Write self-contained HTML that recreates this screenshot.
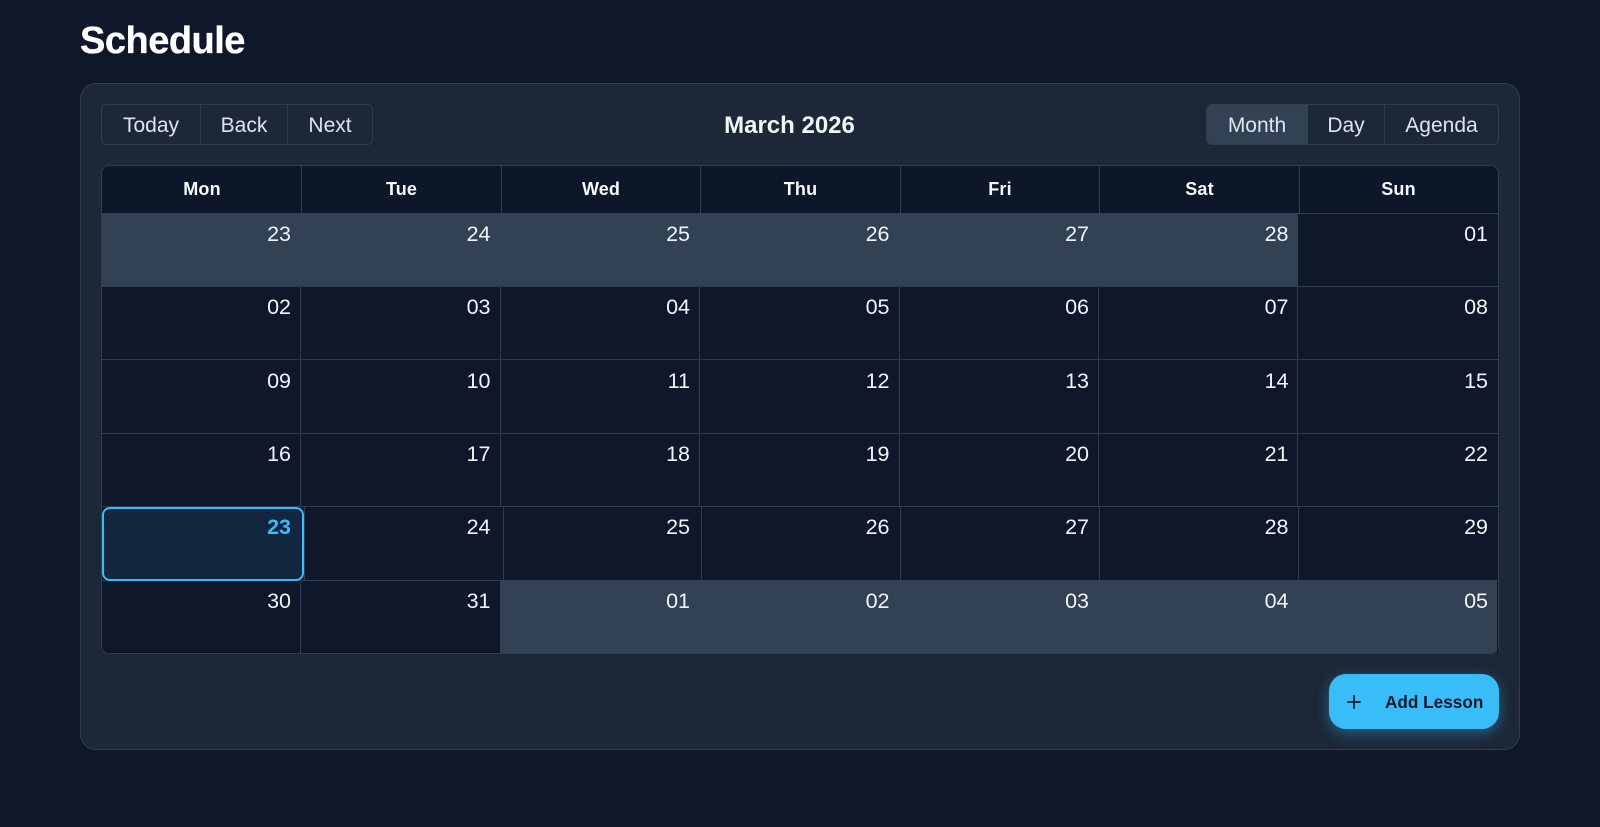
<!DOCTYPE html>
<html lang="en">
<head>
<meta charset="utf-8">
<title>Schedule</title>
<style>
html,body{margin:0;padding:0;width:1600px;height:827px;overflow:hidden;background:#0f172a;font-family:"Liberation Sans",sans-serif;}
.a,.l,.t,.n,.h{position:absolute}
.card{position:absolute;left:80px;top:83px;width:1438px;height:665px;background:#1c2737;border:1px solid #303c50;border-radius:16px}
.title{position:absolute;left:80px;top:19px;font-size:38px;line-height:44px;font-weight:700;color:#fff;letter-spacing:-.5px;white-space:nowrap;-webkit-text-stroke:.3px #fff}
.group{position:absolute;top:104px;height:39px;border:1px solid #303c50;border-radius:6px;overflow:hidden}
.t{top:114px;width:120px;text-align:center;font-size:21px;line-height:24px;color:#dfe5ee;white-space:nowrap}
.l{background:#303c50}
.month{position:absolute;left:724px;top:112px;width:131px;text-align:center;font-size:24px;line-height:28px;font-weight:700;color:#f1f5f9;white-space:nowrap}
.grid{position:absolute;left:101px;top:165px;width:1398px;height:489px;box-sizing:border-box;border:1px solid #303c50;border-radius:8px;overflow:hidden;background:#0f172a}
.h{top:178px;width:120px;text-align:center;font-size:18px;line-height:22px;font-weight:700;color:#f8fafc;letter-spacing:.15px}
.n{width:40px;text-align:right;font-size:21.5px;line-height:24px;color:#f1f5f9}
.c1{left:251px}.c2{left:450.5px}.c3{left:650px}.c4{left:849.5px}.c5{left:1049px}.c6{left:1248.5px}.c7{left:1448px}
.r1{top:222px}.r2{top:295px}.r3{top:369px}.r4{top:442px}.r5{top:515px}.r6{top:589px}
.today{position:absolute;left:102px;top:507px;width:202px;height:74px;box-sizing:border-box;border:2px solid #38bdf8;border-radius:8px;background:#13263f}
.btn{position:absolute;left:1329px;top:674px;width:170px;height:55px;background:#38bdf8;border-radius:17px;box-shadow:0 4px 14px rgba(56,189,248,.4)}
.btnt{position:absolute;left:1385px;top:692px;font-size:17.2px;line-height:20px;font-weight:700;color:#0f172a;white-space:nowrap}
</style>
</head>
<body>
<div class="title">Schedule</div>
<div class="card"></div>

<div class="group" style="left:101px;width:270px"></div>
<div class="l" style="left:200px;top:105px;width:1px;height:39px"></div>
<div class="l" style="left:287px;top:105px;width:1px;height:39px"></div>
<span class="t" style="left:91px">Today</span>
<span class="t" style="left:184px">Back</span>
<span class="t" style="left:270px">Next</span>

<div class="month">March 2026</div>

<div class="group" style="left:1206px;width:291px"><div style="position:absolute;left:-1px;top:-1px;width:102px;height:41px;background:#334155"></div></div>
<div class="l" style="left:1384px;top:105px;width:1px;height:39px"></div>
<span class="t" style="left:1197px">Month</span>
<span class="t" style="left:1286px">Day</span>
<span class="t" style="left:1381.5px">Agenda</span>

<div class="grid">
  <div class="a" style="left:0;top:0;width:1396px;height:47px;background:#0d172a"></div>
  <div class="a" style="left:0;top:47px;width:1196px;height:74px;background:#334155"></div>
  <div class="a" style="left:398px;top:414px;width:997px;height:73px;background:#334155"></div>
</div>

<div class="l" style="left:1298px;top:213px;width:200px;height:1px"></div>
<div class="l" style="left:102px;top:286px;width:1396px;height:1px"></div>
<div class="l" style="left:102px;top:359px;width:1396px;height:1px"></div>
<div class="l" style="left:102px;top:433px;width:1396px;height:1px"></div>
<div class="l" style="left:102px;top:506px;width:1396px;height:1px"></div>
<div class="l" style="left:102px;top:580px;width:398px;height:1px"></div>
<div class="l" style="left:500px;top:580px;width:998px;height:1px;background:#334155"></div>

<div class="l" style="left:301px;top:166px;width:1px;height:47px"></div>
<div class="l" style="left:501px;top:166px;width:1px;height:47px"></div>
<div class="l" style="left:700px;top:166px;width:1px;height:47px"></div>
<div class="l" style="left:900px;top:166px;width:1px;height:47px"></div>
<div class="l" style="left:1099px;top:166px;width:1px;height:47px"></div>
<div class="l" style="left:1299px;top:166px;width:1px;height:47px"></div>

<div class="l" style="left:300px;top:287px;width:1px;height:219px"></div>
<div class="l" style="left:500px;top:287px;width:1px;height:219px"></div>
<div class="l" style="left:699px;top:287px;width:1px;height:219px"></div>
<div class="l" style="left:899px;top:287px;width:1px;height:219px"></div>
<div class="l" style="left:1098px;top:287px;width:1px;height:219px"></div>
<div class="l" style="left:1297px;top:287px;width:1px;height:219px"></div>

<div class="l" style="left:304px;top:507px;width:1px;height:73px"></div>
<div class="l" style="left:503px;top:507px;width:1px;height:73px"></div>
<div class="l" style="left:701px;top:507px;width:1px;height:73px"></div>
<div class="l" style="left:900px;top:507px;width:1px;height:73px"></div>
<div class="l" style="left:1099px;top:507px;width:1px;height:73px"></div>
<div class="l" style="left:1298px;top:507px;width:1px;height:73px"></div>

<div class="l" style="left:300px;top:581px;width:1px;height:72px"></div>
<div class="l" style="left:1497px;top:581px;width:1px;height:72px;background:#0f172a"></div>

<div class="today"></div>

<span class="h" style="left:142px">Mon</span>
<span class="h" style="left:341.5px">Tue</span>
<span class="h" style="left:541px">Wed</span>
<span class="h" style="left:740.5px">Thu</span>
<span class="h" style="left:940px">Fri</span>
<span class="h" style="left:1139.5px">Sat</span>
<span class="h" style="left:1338.5px">Sun</span>

<span class="n c1 r1">23</span><span class="n c2 r1">24</span><span class="n c3 r1">25</span><span class="n c4 r1">26</span><span class="n c5 r1">27</span><span class="n c6 r1">28</span><span class="n c7 r1">01</span>
<span class="n c1 r2">02</span><span class="n c2 r2">03</span><span class="n c3 r2">04</span><span class="n c4 r2">05</span><span class="n c5 r2">06</span><span class="n c6 r2">07</span><span class="n c7 r2">08</span>
<span class="n c1 r3">09</span><span class="n c2 r3">10</span><span class="n c3 r3">11</span><span class="n c4 r3">12</span><span class="n c5 r3">13</span><span class="n c6 r3">14</span><span class="n c7 r3">15</span>
<span class="n c1 r4">16</span><span class="n c2 r4">17</span><span class="n c3 r4">18</span><span class="n c4 r4">19</span><span class="n c5 r4">20</span><span class="n c6 r4">21</span><span class="n c7 r4">22</span>
<span class="n c1 r5" style="color:#38bdf8;font-weight:700">23</span><span class="n c2 r5">24</span><span class="n c3 r5">25</span><span class="n c4 r5">26</span><span class="n c5 r5">27</span><span class="n c6 r5">28</span><span class="n c7 r5">29</span>
<span class="n c1 r6">30</span><span class="n c2 r6">31</span><span class="n c3 r6">01</span><span class="n c4 r6">02</span><span class="n c5 r6">03</span><span class="n c6 r6">04</span><span class="n c7 r6">05</span>

<div class="btn"></div>
<svg class="a" style="left:1346px;top:694px" width="16" height="16" viewBox="0 0 16 16"><path d="M8 1.3V14.7M1.3 8H14.7" stroke="#0f172a" stroke-width="1.8" fill="none"/></svg>
<span class="btnt">Add Lesson</span>
</body>
</html>
